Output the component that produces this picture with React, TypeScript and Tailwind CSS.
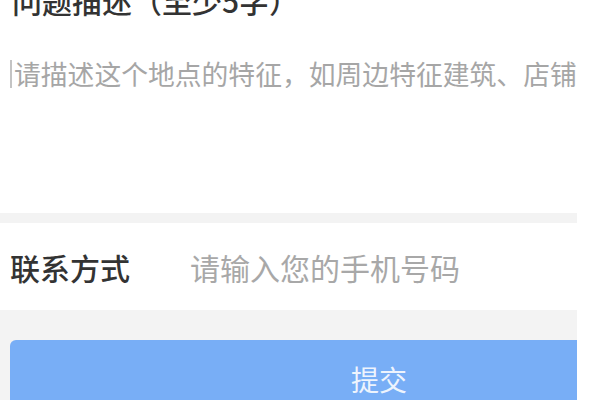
import React from "react";

const font = { fontFamily: '"Noto Sans CJK SC", "Noto Sans", sans-serif' };

export default function App() {
  return (
    <div className="w-[600px] h-[400px] overflow-hidden bg-white" style={font}>
      <div className="w-[577px] h-[400px] flex flex-col">
        <div className="h-[213px] bg-white flex flex-col">
          <div className="mt-[-15px] pl-[12px] text-[30px] leading-[30px] font-medium text-[#333] whitespace-nowrap">
            问题描述（至少5字）
          </div>
          <div className="mt-[45px] flex items-center pl-[10px] overflow-hidden whitespace-nowrap">
            <span className="w-[2px] h-[28px] bg-[#c4c4c4] mr-[2px] shrink-0" />
            <span className="text-[26.8px] leading-[28px] text-[#a6a6a6]">
              请描述这个地点的特征，如周边特征建筑、店铺
            </span>
          </div>
        </div>
        <div className="h-[10px] bg-[#f3f3f3]" />
        <div className="h-[87px] bg-white flex items-center pl-[10px]">
          <span className="w-[180px] text-[30px] leading-[30px] font-medium text-[#333]">联系方式</span>
          <span className="text-[30px] leading-[30px] text-[#a8a8a8]">请输入您的手机号码</span>
        </div>
        <div className="flex-1 bg-[#f3f3f3] pt-[30px] pl-[10px] flex flex-col">
          <div className="flex-1 bg-[#78aef6] rounded-tl-[6px] flex justify-center pl-[171px] pt-[24px]">
            <span className="text-[28px] leading-[30px] text-[#eef4fd]">提交</span>
          </div>
        </div>
      </div>
    </div>
  );
}
